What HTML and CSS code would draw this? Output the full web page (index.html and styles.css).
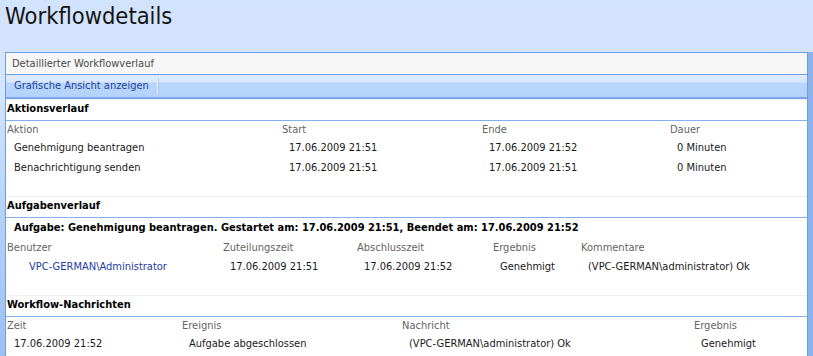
FILE: index.html
```html
<!DOCTYPE html>
<html lang="de">
  <head>
    <meta charset="UTF-8" />
    <title>Workflowdetails</title>
    <link rel="stylesheet" href="styles.css">
  </head>
  <body>
    <h1 class="page-title">Workflowdetails</h1>

    <div class="panel">
      <div class="panel-head">Detaillierter Workflowverlauf</div>
      <div class="toolbar">
        <a class="toolbar-link" href="#">Grafische Ansicht anzeigen</a>
      </div>

      <!-- Aktionsverlauf -->
      <div class="section">
        <div class="section-title">Aktionsverlauf</div>
        <div class="grid actions">
          <div class="col-head">Aktion</div>
          <div class="col-head">Start</div>
          <div class="col-head">Ende</div>
          <div class="col-head">Dauer</div>

          <div class="cell">Genehmigung beantragen</div>
          <div class="cell">17.06.2009 21:51</div>
          <div class="cell">17.06.2009 21:52</div>
          <div class="cell">0 Minuten</div>

          <div class="cell">Benachrichtigung senden</div>
          <div class="cell">17.06.2009 21:51</div>
          <div class="cell">17.06.2009 21:51</div>
          <div class="cell">0 Minuten</div>
        </div>
      </div>

      <!-- Aufgabenverlauf -->
      <div class="section">
        <div class="section-title">Aufgabenverlauf</div>
        <div class="task-title">Aufgabe: Genehmigung beantragen. Gestartet am: 17.06.2009 21:51, Beendet am: 17.06.2009 21:52</div>
        <div class="grid tasks">
          <div class="col-head">Benutzer</div>
          <div class="col-head">Zuteilungszeit</div>
          <div class="col-head">Abschlusszeit</div>
          <div class="col-head">Ergebnis</div>
          <div class="col-head">Kommentare</div>

          <div class="cell user"><a href="#">VPC-GERMAN\Administrator</a></div>
          <div class="cell">17.06.2009 21:51</div>
          <div class="cell">17.06.2009 21:52</div>
          <div class="cell">Genehmigt</div>
          <div class="cell">(VPC-GERMAN\administrator) Ok</div>
        </div>
      </div>

      <!-- Workflow-Nachrichten -->
      <div class="section">
        <div class="section-title">Workflow-Nachrichten</div>
        <div class="grid messages">
          <div class="col-head">Zeit</div>
          <div class="col-head">Ereignis</div>
          <div class="col-head">Nachricht</div>
          <div class="col-head">Ergebnis</div>

          <div class="cell">17.06.2009 21:52</div>
          <div class="cell">Aufgabe abgeschlossen</div>
          <div class="cell">(VPC-GERMAN\administrator) Ok</div>
          <div class="cell">Genehmigt</div>
        </div>
      </div>
    </div>
  </body>
</html>
```

FILE: styles.css
```css
/* Global Styles */
body {
  margin: 0;
  height: 356px;
  overflow: hidden;
  font-family: "DejaVu Sans Condensed", "DejaVu Sans", sans-serif;
  font-stretch: condensed;
  font-size: 11px;
  color: #1a1a1a;
  background: linear-gradient(#d2e3fd 0, #d5e5fe 90px, #b9d3f8 200px, #9dbff1 356px);
}

a {
  text-decoration: none;
}

.page-title {
  margin: 0;
  padding: 0 0 0 5px;
  height: 52px;
  font-size: 23.5px;
  font-weight: normal;
  line-height: 32px;
  color: #141414;
}

/* Panel */
.panel {
  margin-left: 5px;
  width: 801px;
  border: 1px solid #6d9de3;
  border-bottom: none;
  background: #fff;
  box-shadow: 5px 0 0 #8db3ec;
  height: 303px;
  overflow: hidden;
}

.panel-head {
  height: 21px;
  line-height: 21px;
  padding-left: 6px;
  background: #f7f7f7;
  color: #4a4a4a;
  border-bottom: 1px solid #6d9de3;
}

.toolbar {
  height: 22px;
  display: flex;
  align-items: center;
  background: linear-gradient(#e2edfd 0, #d6e6fd 7px, #b9d6fc 8px, #b4d2fb 100%);
  border-bottom: 2px solid #7aa6e8;
}

.toolbar-link {
  color: #1e3f9d;
  padding: 0 8px;
  line-height: 16px;
  border-right: 1px solid #eaf2fe;
  box-shadow: 1px 0 0 #a9c9f6;
}

/* Sections */
.section {
  border-top: 1px solid #efefef;
  padding-bottom: 19px;
}

.section:first-of-type {
  border-top-color: #fff;
}

.section-title {
  height: 20px;
  line-height: 17px;
  padding-left: 1px;
  font-weight: bold;
  color: #000;
  border-bottom: 1px solid #85afee;
}

.task-title {
  height: 20px;
  line-height: 20px;
  padding-left: 8px;
  font-weight: bold;
  color: #000;
}

.grid {
  display: grid;
  grid-auto-rows: 20px;
  grid-template-rows: 16px;
  align-items: center;
}

.tasks {
  grid-template-rows: 18px;
}

.actions {
  grid-template-columns: 275px 200px 188px 1fr;
}

.tasks {
  grid-template-columns: 216px 134px 136px 88px 1fr;
}

.messages {
  grid-template-columns: 175px 220px 292px 1fr;
}

.col-head {
  padding-left: 1px;
  color: #646464;
  white-space: nowrap;
}

.cell {
  padding-left: 8px;
  white-space: nowrap;
}

.cell.user {
  padding-left: 23px;
}

.cell.user a {
  color: #1c3ba4;
}
```
